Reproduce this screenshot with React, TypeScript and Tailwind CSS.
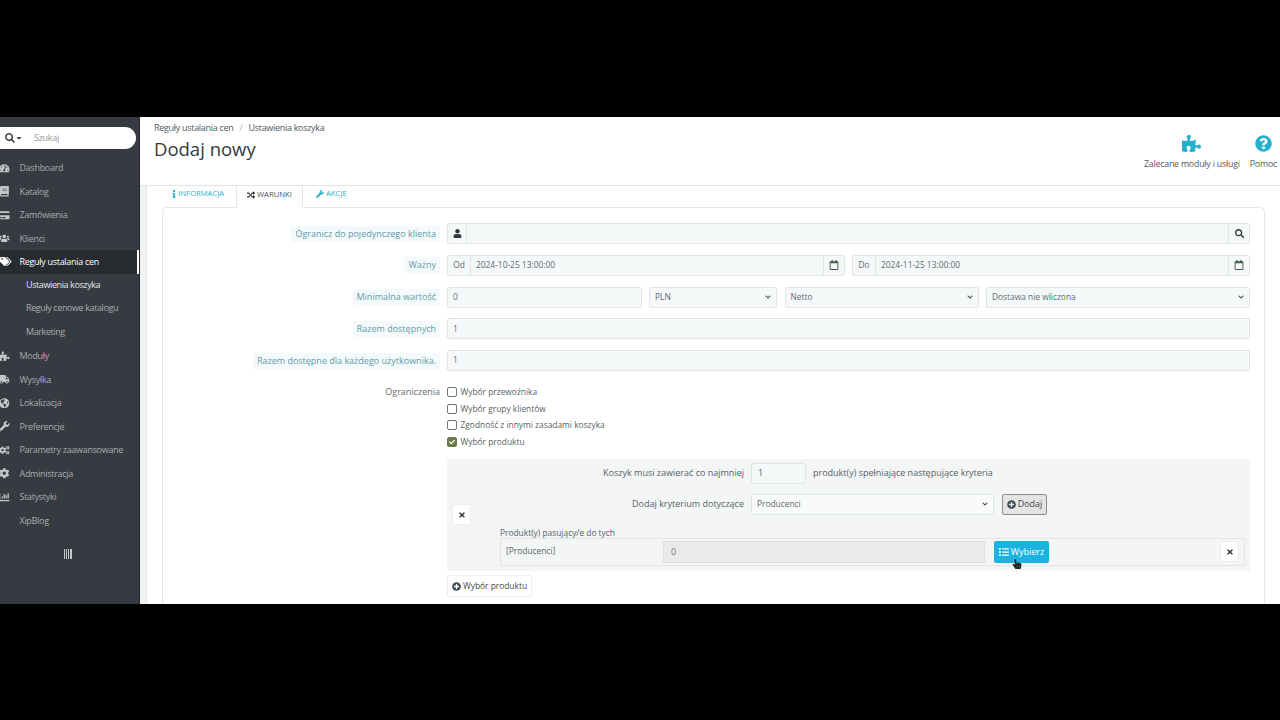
import React from "react";
import {
  FaBook,
  FaCaretDown,
  FaChartBar,
  FaCheck,
  FaChevronDown,
  FaCog,
  FaCogs,
  FaCreditCard,
  FaGlobeAmericas,
  FaHandPointer,
  FaInfo,
  FaList,
  FaPlusCircle,
  FaPuzzlePiece,
  FaQuestionCircle,
  FaRandom,
  FaRegCalendar,
  FaSearch,
  FaTachometerAlt,
  FaTags,
  FaTimes,
  FaTruck,
  FaUser,
  FaUsers,
  FaWrench,
} from "react-icons/fa";

const topMenu = [
  { label: "Dashboard", icon: <FaTachometerAlt /> },
  { label: "Katalog", icon: <FaBook /> },
  { label: "Zamówienia", icon: <FaCreditCard /> },
  { label: "Klienci", icon: <FaUsers /> },
];

const bottomMenu = [
  { label: "Moduły", icon: <FaPuzzlePiece /> },
  { label: "Wysyłka", icon: <FaTruck /> },
  { label: "Lokalizacja", icon: <FaGlobeAmericas /> },
  { label: "Preferencje", icon: <FaWrench /> },
  { label: "Parametry zaawansowane", icon: <FaCogs /> },
  { label: "Administracja", icon: <FaCog /> },
  { label: "Statystyki", icon: <FaChartBar /> },
  { label: "XipBlog", icon: null },
];

function MenuItem({ label, icon }: { label: string; icon: React.ReactNode }) {
  return (
    <div className="h-[23.5px] flex items-center text-[#a7abb0]">
      <span className="w-[19.5px] -ml-[1px] text-[10.5px] text-[#c4c7ca] shrink-0">{icon}</span>
      <span className="ml-[1px]">{label}</span>
    </div>
  );
}

function Sidebar() {
  return (
    <aside className="w-[140px] shrink-0 bg-[#363a41] border-r border-[#25272b] text-[9px] tracking-[-0.3px] overflow-hidden">
      <div className="h-[32px] pt-[10px]">
        <div className="h-[22px] w-[136px] bg-white rounded-r-full rounded-l-[10px] flex items-center pl-[5px] text-[#9a9a9a]">
          <FaSearch className="text-[10px] text-[#444]" />
          <FaCaretDown className="text-[8px] text-[#444]" />
          <span className="ml-[11px]">Szukaj</span>
        </div>
      </div>
      <div className="mt-[7px]">
        {topMenu.map((m) => (
          <MenuItem key={m.label} {...m} />
        ))}
      </div>
      <div className="h-[23.5px] flex items-center bg-[#282b30] border-r-[2px] border-white text-white">
        <FaTags className="w-[19.5px] pr-[8px] shrink-0 text-[11px]" />
        <span>Reguły ustalania cen</span>
      </div>
      <div className="pl-[26px] -mt-[1px] pb-[1px] text-[#a7abb0] tracking-[-0.4px]">
        <div className="h-[23.5px] flex items-center text-[#e4e5e6]">Ustawienia koszyka</div>
        <div className="h-[23.5px] flex items-center">Reguły cenowe katalogu</div>
        <div className="h-[23.5px] flex items-center">Marketing</div>
      </div>
      {bottomMenu.map((m) => (
        <MenuItem key={m.label} {...m} />
      ))}
      <div className="flex justify-center mt-[16.5px] pr-[3px]">
        <svg width="8" height="10" viewBox="0 0 8 10" fill="#c4c7ca">
          <rect x="0" width="1" height="10" />
          <rect x="2" width="1" height="10" />
          <rect x="4" width="1" height="10" />
          <rect x="6" width="2" height="10" />
        </svg>
      </div>
    </aside>
  );
}

function Header() {
  return (
    <header className="h-[69px] shrink-0 bg-white border-b border-[#e4e6e6] flex justify-between pl-[14px] pr-[3px]">
      <div>
        <div className="mt-[4px] text-[9px] tracking-[-0.3px] text-[#4f5a62] flex gap-[6px]">
          <span>Reguły ustalania cen</span>
          <span className="text-[#b9b9b9]">/</span>
          <span>Ustawienia koszyka</span>
        </div>
        <h1 className="text-[18.5px] leading-[27px] text-[#363a41]">Dodaj nowy</h1>
      </div>
      <div className="flex gap-[10px] pt-[17px] text-[8.8px] tracking-[-0.2px] text-[#555b60]">
        <div className="flex flex-col items-center">
          <FaPuzzlePiece className="text-[19px] text-[#25b0cf]" />
          <span className="mt-[5px] leading-[12px]">Zalecane moduły i usługi</span>
        </div>
        <div className="flex flex-col items-center">
          <FaQuestionCircle className="text-[17px] mt-[1px] text-[#25b0cf]" />
          <span className="mt-[6px] leading-[12px]">Pomoc</span>
        </div>
      </div>
    </header>
  );
}

function Label({ children }: { children: React.ReactNode }) {
  return (
    <div className="w-[277px] shrink-0 text-right">
      <span className="inline-block bg-[#f4fafb] px-[4px] text-[#5f9aa6] leading-[16px]">{children}</span>
    </div>
  );
}

const fieldCls = "h-[21px] bg-[#f5f8f8] border border-[#dfe6e7] rounded-[2px] flex items-center text-[8.4px] text-[#5f6a72]";
const addonCls = "h-full flex items-center justify-center shrink-0 border-[#dfe6e7]";

function Select({ value, className }: { value: string; className: string }) {
  return (
    <div className={`${fieldCls} ${className} justify-between px-[5px]`}>
      <span>{value}</span>
      <FaChevronDown className="text-[6px] text-[#444]" />
    </div>
  );
}

function DateField({ prefix, value, className }: { prefix: string; value: string; className: string }) {
  return (
    <div className={`${fieldCls} ${className}`}>
      <div className={`${addonCls} w-[23px] border-r`}>{prefix}</div>
      <span className="ml-[5px] flex-1">{value}</span>
      <div className={`${addonCls} w-[21px] border-l text-[#3f5f45]`}>
        <FaRegCalendar className="text-[10px]" />
      </div>
    </div>
  );
}

function Check({ label, checked }: { label: string; checked?: boolean }) {
  return (
    <div className="h-[16.5px] flex items-center text-[8.4px] text-[#555f66]">
      <span
        className={`w-[10px] h-[10px] rounded-[2px] border flex items-center justify-center shrink-0 ${
          checked ? "bg-[#6c7a4a] border-[#6c7a4a]" : "bg-white border-[#6f7477]"
        }`}
      >
        {checked && <FaCheck className="text-[6px] text-white" />}
      </span>
      <span className="ml-[3.5px]">{label}</span>
    </div>
  );
}

function CloseButton() {
  return (
    <div className="w-[19px] h-[21px] bg-white border border-[#eeeeee] rounded-[2px] flex items-center justify-center">
      <FaTimes className="text-[8px] text-[#33383c]" />
    </div>
  );
}

function ProductRules() {
  return (
    <div className="bg-[#f4f6f6] h-[112px] flex">
      <div className="w-[53px] shrink-0 pl-[5px] pt-[45px]">
        <CloseButton />
      </div>
      <div className="flex-1 pr-[5px] pt-[3.5px]">
        <div className="h-[21px] flex items-center text-[#555f66]">
          <span className="w-[251px] pr-[7px] text-right shrink-0">Koszyk musi zawierać co najmniej</span>
          <div className="w-[55px] h-full bg-[#f5f8f8] border border-[#dfe6e7] rounded-[2px] pl-[6px] flex items-center">1</div>
          <span className="ml-[7px]">produkt(y) spełniające następujące kryteria</span>
        </div>
        <div className="h-[21px] mt-[10px] flex items-center text-[#555f66]">
          <span className="w-[251px] pr-[7px] text-right shrink-0">Dodaj kryterium dotyczące</span>
          <Select value="Producenci" className="w-[243px] bg-[#f9fafa]" />
          <div className="ml-[8px] w-[45px] h-full bg-[#e4e4e4] border border-[#8a8f8f] rounded-[2px] flex items-center justify-center gap-[2px] text-[#3f4a50]">
            <FaPlusCircle className="text-[9px]" />
            <span>Dodaj</span>
          </div>
        </div>
        <div className="mt-[13.5px] leading-[9.5px] text-[8.4px] text-[#555f66]">Produkt(y) pasujący/e do tych</div>
        <div className="h-[28px] bg-[#f4f6f6] border border-[#e2e5e5] flex items-center">
          <span className="w-[162px] pl-[5px] shrink-0 text-[8.4px] text-[#555f66]">[Producenci]</span>
          <div className="w-[322px] h-[22px] bg-[#eaeaea] border border-[#dfdfdf] rounded-[2px] pl-[7px] flex items-center text-[#77797a]">0</div>
          <div className="relative ml-[9px] w-[55px] h-[22px] bg-[#1cb2e0] rounded-[2px] flex items-center justify-center gap-[2px] text-white">
            <FaList className="text-[10px]" />
            <span>Wybierz</span>
            <FaHandPointer className="absolute left-[18px] top-[18px] text-[10px] text-[#222] z-10" />
          </div>
          <div className="ml-auto mr-[5px]">
            <CloseButton />
          </div>
        </div>
      </div>
    </div>
  );
}

function ConditionsPanel() {
  return (
    <div className="flex-1 border border-b-0 border-[#e6e8e8] rounded-t-[5px] pt-[15px] pr-[14px] text-[9px]">
      <div className="flex flex-col gap-[10.8px]">
        <div className="flex items-center">
          <Label>Ogranicz do pojedynczego klienta</Label>
          <div className={`${fieldCls} ml-[7px] flex-1`}>
            <div className={`${addonCls} w-[19px] border-r text-[#33383c]`}>
              <FaUser className="text-[9px]" />
            </div>
            <div className="flex-1" />
            <div className={`${addonCls} w-[21px] border-l text-[#33383c]`}>
              <FaSearch className="text-[9px]" />
            </div>
          </div>
        </div>
        <div className="flex items-center">
          <Label>Ważny</Label>
          <div className="ml-[7px] flex-1 flex gap-[7px]">
            <DateField prefix="Od" value="2024-10-25 13:00:00" className="flex-1" />
            <DateField prefix="Do" value="2024-11-25 13:00:00" className="flex-1" />
          </div>
        </div>
        <div className="flex items-center">
          <Label>Minimalna wartość</Label>
          <div className="ml-[7px] flex-1 flex gap-[7.5px]">
            <div className={`${fieldCls} w-[194.5px] pl-[5px]`}>0</div>
            <Select value="PLN" className="w-[128px]" />
            <Select value="Netto" className="w-[194px]" />
            <Select value="Dostawa nie wliczona" className="flex-1" />
          </div>
        </div>
        <div className="flex items-center">
          <Label>Razem dostępnych</Label>
          <div className={`${fieldCls} ml-[7px] flex-1 pl-[5px]`}>1</div>
        </div>
        <div className="flex items-center">
          <Label>Razem dostępne dla każdego użytkownika.</Label>
          <div className={`${fieldCls} ml-[7px] flex-1 pl-[5px]`}>1</div>
        </div>
      </div>
      <div className="flex mt-[13px]">
        <div className="w-[277px] shrink-0 text-right text-[#5f6a72] leading-[16.5px]">Ograniczenia</div>
        <div className="ml-[7px] flex-1">
          <Check label="Wybór przewoźnika" />
          <Check label="Wybór grupy klientów" />
          <Check label="Zgodność z innymi zasadami koszyka" />
          <Check label="Wybór produktu" checked />
          <div className="mt-[9px]">
            <ProductRules />
          </div>
          <div className="mt-[4px] w-[85px] h-[22px] bg-white border border-[#eeeeee] rounded-[2px] flex items-center justify-center gap-[2px] text-[8.4px] text-[#3f4a50] whitespace-nowrap">
            <FaPlusCircle className="text-[9px]" />
            <span>Wybór produktu</span>
          </div>
        </div>
      </div>
    </div>
  );
}

function Tabs() {
  return (
    <div className="h-[21px] shrink-0 flex items-stretch text-[7.7px]">
      <div className="w-[74px] pl-[8px] pb-[5px] flex items-center text-[#25b0cf]">
        <FaInfo className="text-[8px]" />
        <span>INFORMACJA</span>
      </div>
      <div className="w-[67px] h-[22px] pb-[5px] bg-white border border-t-0 border-b-0 border-[#e6e8e8] flex items-center justify-center gap-[2px] text-[#4a5157] z-10">
        <FaRandom className="text-[8px] text-[#33383c]" />
        <span>WARUNKI</span>
      </div>
      <div className="w-[57px] pl-[13px] pb-[5px] flex items-center gap-[2px] text-[#25b0cf]">
        <FaWrench className="text-[8px]" />
        <span>AKCJE</span>
      </div>
    </div>
  );
}

export default function App() {
  return (
    <div className="w-[1280px] h-[720px] bg-black flex flex-col overflow-hidden font-['Open_Sans',sans-serif]">
      <div className="h-[117px] shrink-0" />
      <div className="h-[487px] shrink-0 flex bg-white overflow-hidden">
        <Sidebar />
        <main className="flex-1 flex flex-col min-w-0">
          <Header />
          <div className="flex-1 flex min-h-0">
            <div className="w-[7px] shrink-0 bg-[#f1f3f3] border-r border-[#e4e6e6]" />
            <div className="flex-1 flex flex-col pl-[15px] pr-[15px] min-h-0">
              <Tabs />
              <ConditionsPanel />
            </div>
          </div>
        </main>
      </div>
      <div className="flex-1" />
    </div>
  );
}
